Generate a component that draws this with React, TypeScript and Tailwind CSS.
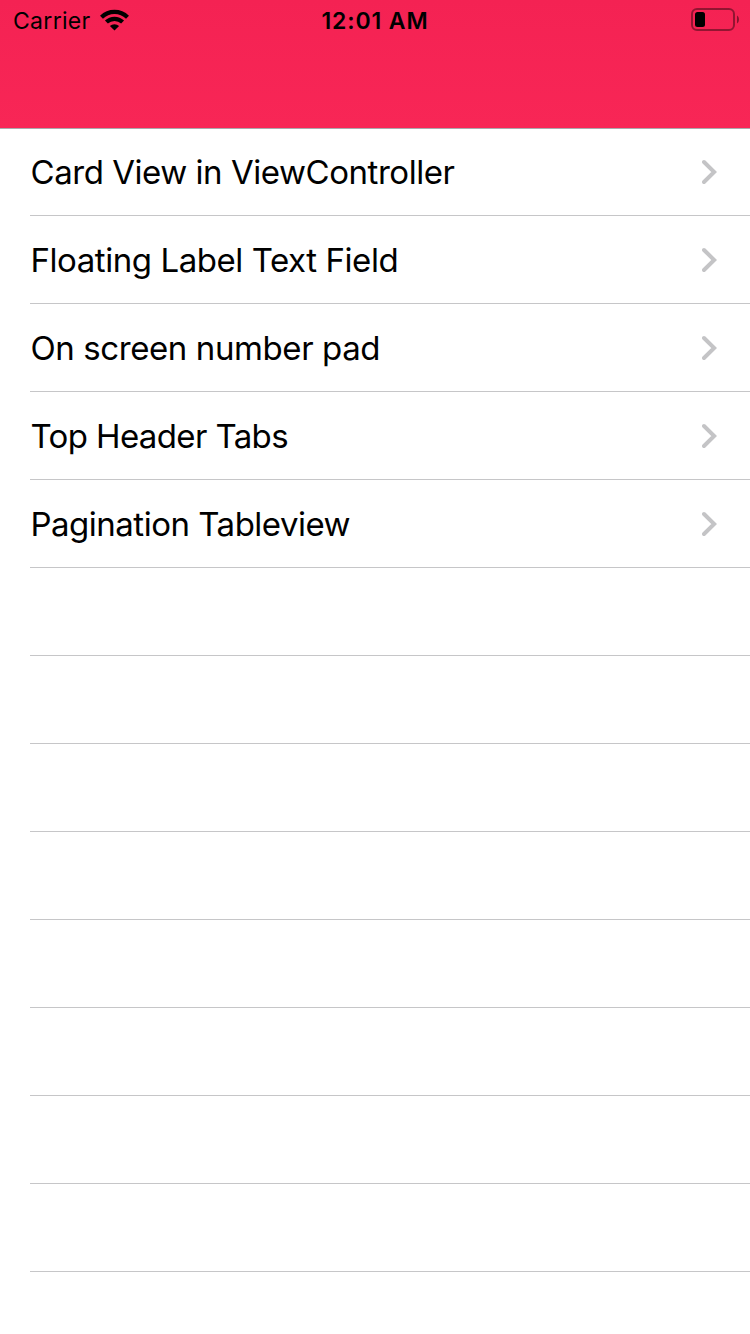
const rows: { label: string; tracking: string }[] = [
  { label: "Card View in ViewController", tracking: "tracking-[-0.46px]" },
  { label: "Floating Label Text Field", tracking: "tracking-[-0.44px]" },
  { label: "On screen number pad", tracking: "tracking-[-0.41px]" },
  { label: "Top Header Tabs", tracking: "tracking-[-0.62px]" },
  { label: "Pagination Tableview", tracking: "tracking-[-0.5px]" },
];

export default function App() {
  return (
    <div className="flex h-[1334px] w-[750px] flex-col overflow-hidden bg-white font-['Inter','Liberation_Sans',sans-serif] text-black">
      <header className="h-32 shrink-0 bg-linear-to-b from-[#f42253] to-[#f82656]">
        <div className="grid h-[39px] grid-cols-3 items-center">
          <div className="flex items-center pl-[13px]">
            <span className="w-[87px] pt-[3px] text-[23px] leading-9 tracking-[0.3px]">Carrier</span>
            <svg width="29" height="22" viewBox="0 0 29 22" className="mt-px" fill="none" stroke="#000" strokeWidth="4.2">
              <path d="M1.5 8.2a18.6 18.6 0 0 1 26 0" />
              <path d="M6.4 13.1a11.7 11.7 0 0 1 16.2 0" />
              <path d="M14.5 21.6l-4.6-4.6a6.7 6.7 0 0 1 9.2 0z" fill="#000" stroke="none" />
            </svg>
          </div>
          <span className="pt-[3px] text-center text-[23px] font-semibold leading-9 tracking-[0.9px]">12:01 AM</span>
          <div className="flex justify-end pr-[11px]">
            <svg width="48" height="23" viewBox="0 0 48 23">
              <rect x="1" y="1" width="42" height="21" rx="5" fill="none" stroke="#000" strokeOpacity=".4" strokeWidth="2" />
              <rect x="4" y="4" width="10" height="15" rx="2.5" />
              <path d="M46 7.5c2.6 1.2 2.6 6.8 0 8z" fillOpacity=".45" />
            </svg>
          </div>
        </div>
      </header>
      <ul className="-mb-px border-t border-[#a9a9ac]">
        {Array.from({ length: 13 }, (_, i) => (
          <li key={i} className="group ml-[30px] flex h-[88px] items-center justify-between border-b border-[#c6c6c8] pr-[33px] first:h-[87px]">
            {rows[i] && (
              <>
                <span className={`pl-[0.5px] pt-px text-[33px] leading-10 group-first:pt-0 ${rows[i].tracking}`}>{rows[i].label}</span>
                <svg width="15" height="26" viewBox="0 0 15 26" fill="none" stroke="#c4c4c6" strokeWidth="4" strokeLinecap="round">
                  <path d="M2 3l10.2 10L2 23" />
                </svg>
              </>
            )}
          </li>
        ))}
      </ul>
    </div>
  );
}
